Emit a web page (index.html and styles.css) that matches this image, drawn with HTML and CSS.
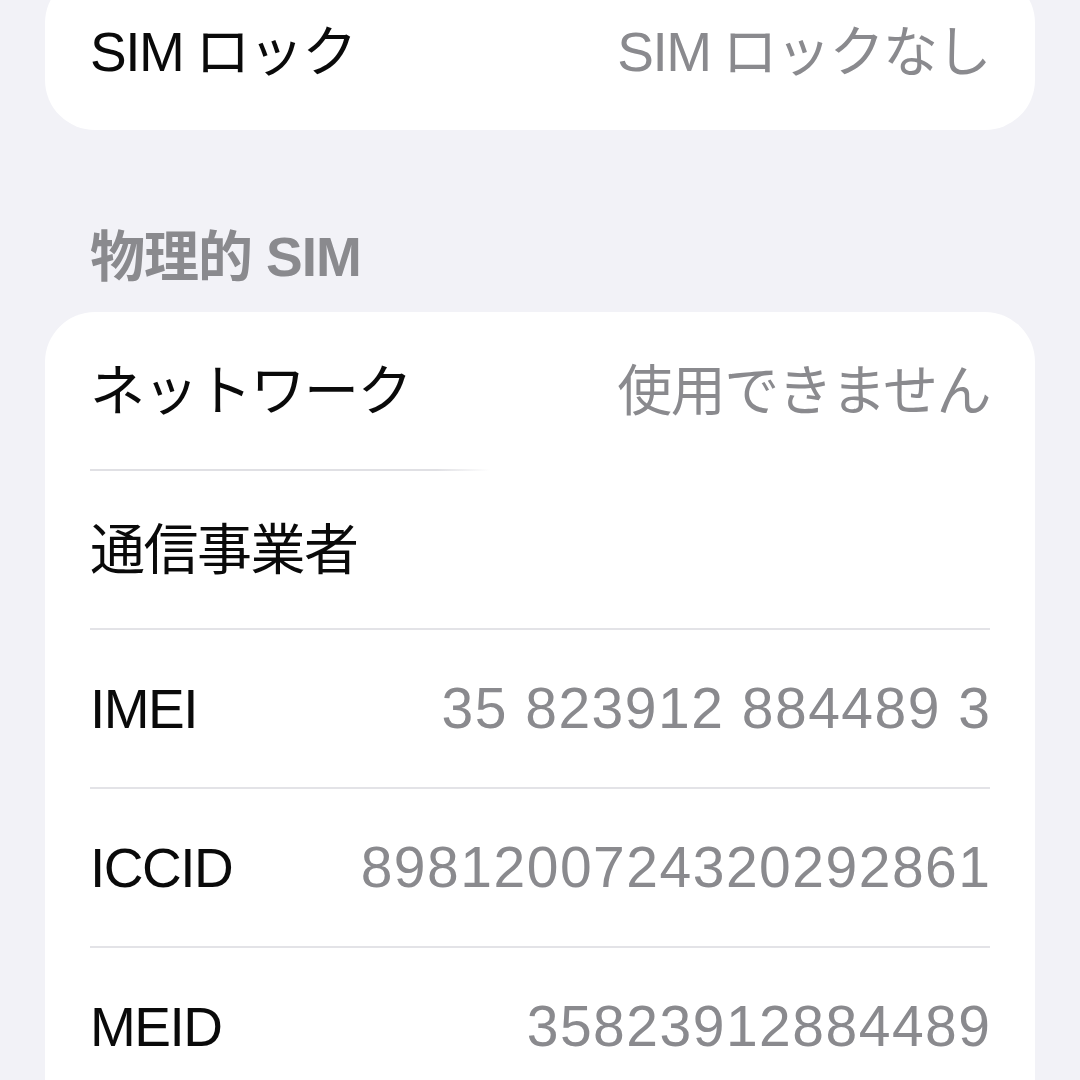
FILE: index.html
```html
<!DOCTYPE html>
<html lang="ja">
<head>
<meta charset="utf-8">
<title>SIM</title>
<link rel="stylesheet" href="styles.css">
</head>
<body>
<main class="page">
  <section class="card card-top">
    <div class="row">
      <span class="label"><span class="lat">SIM</span>ロック</span>
      <span class="value"><span class="lat">SIM</span>ロックなし</span>
    </div>
  </section>

  <h2 class="section-header">物理的<span class="lat-before">SIM</span></h2>

  <section class="card">
    <div class="row">
      <span class="label">ネットワーク</span>
      <span class="value">使用できません</span>
    </div>
    <div class="sep sep-faded"></div>
    <div class="row">
      <span class="label">通信事業者</span>
      <span class="value"></span>
    </div>
    <div class="sep"></div>
    <div class="row">
      <span class="label">IMEI</span>
      <span class="value num">35 823912 884489 3</span>
    </div>
    <div class="sep"></div>
    <div class="row">
      <span class="label">ICCID</span>
      <span class="value num">8981200724320292861</span>
    </div>
    <div class="sep"></div>
    <div class="row">
      <span class="label">MEID</span>
      <span class="value num">35823912884489</span>
    </div>
    <div class="sep"></div>
    <div class="row">
      <span class="label">&nbsp;</span>
      <span class="value"></span>
    </div>
  </section>
</main>
</body>
</html>
```

FILE: styles.css
```css
html, body {
  margin: 0;
  padding: 0;
  background: #f2f2f7;
  height: 1080px;
  overflow: hidden;
}

.page {
  padding: 0 45px;
  font-family: "Liberation Sans", "Noto Sans CJK JP", sans-serif;
  font-size: 55px;
}

.card {
  background: #ffffff;
  border-radius: 50px;
  display: flex;
  flex-direction: column;
}

.card-top {
  margin-top: -27px;
}

.row {
  height: 157px;
  padding: 0 45px;
  display: flex;
  align-items: center;
  justify-content: space-between;
  line-height: 1.2;
}

.label {
  color: #0a0a0a;
  letter-spacing: -1.5px;
  white-space: nowrap;
}

.value {
  color: #8a8a8e;
  letter-spacing: -1.5px;
  white-space: nowrap;
}

.lat {
  margin-right: 12px;
}

.lat-before {
  margin-left: 14px;
}

.value.num {
  font-size: 57px;
  letter-spacing: 1.5px;
  margin-right: -1.5px;
}

.sep {
  height: 2px;
  margin: 0 45px;
  background: #e3e3e7;
}

.sep-faded {
  background: linear-gradient(to right, #e0e0e4 0%, #e0e0e4 38.5%, rgba(255,255,255,0) 44.5%);
}

.section-header {
  margin: 0;
  padding: 94px 0 22px 45px;
  height: 66px;
  line-height: 66px;
  font-size: 55px;
  font-weight: 700;
  color: #8a8a8e;
  letter-spacing: -1px;
}
```
